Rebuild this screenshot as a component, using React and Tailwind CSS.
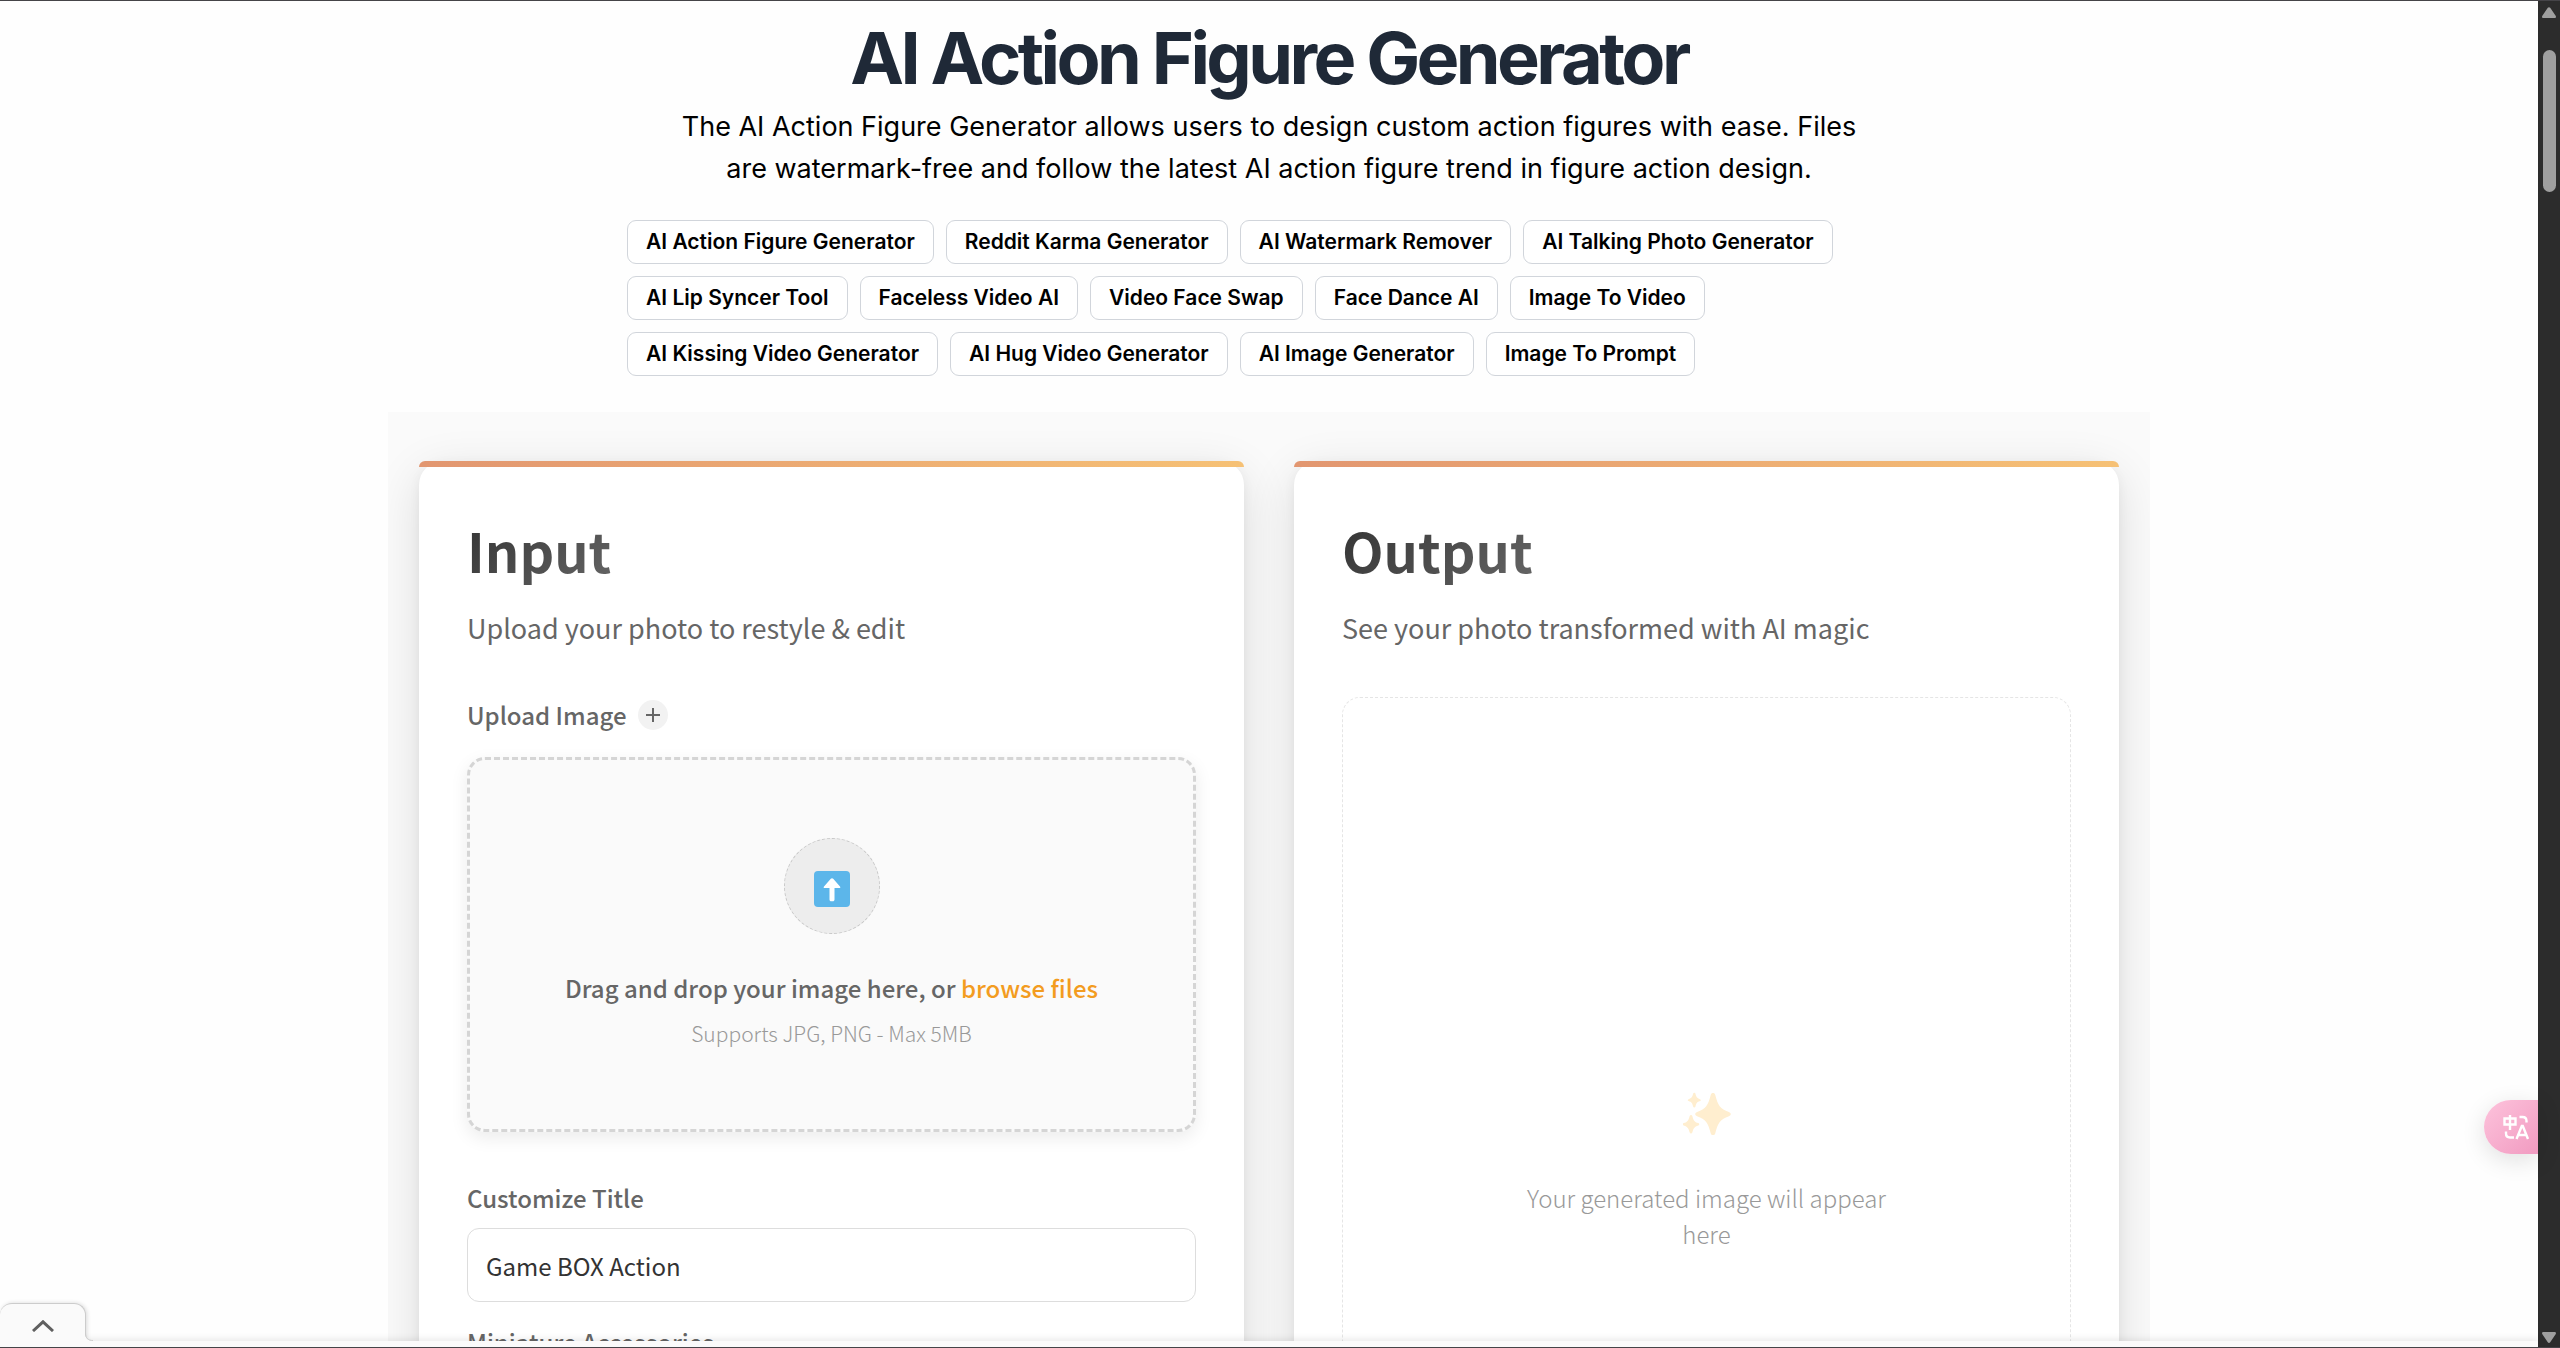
const TOOLS = [
  "AI Action Figure Generator",
  "Reddit Karma Generator",
  "AI Watermark Remover",
  "AI Talking Photo Generator",
  "AI Lip Syncer Tool",
  "Faceless Video AI",
  "Video Face Swap",
  "Face Dance AI",
  "Image To Video",
  "AI Kissing Video Generator",
  "AI Hug Video Generator",
  "AI Image Generator",
  "Image To Prompt",
];

function UploadIcon() {
  return (
    <svg viewBox="0 0 36 36" className="size-9" aria-hidden="true">
      <rect width="36" height="36" rx="4" fill="#5cb6ea" />
      <path
        d="M18 7.2c.5 0 .9.2 1.200.6l6.800 7.600c.8.9.2 1.600-.8 1.600h-4.700v11.500c0 1-.8 1.800-1.700 1.800h-1.600c-1 0-1.700-.8-1.700-1.800V17h-4.700c-1 0-1.600-.7-.8-1.600l6.800-7.600c.3-.4.700-.6 1.200-.6Z"
        fill="#fff"
      />
    </svg>
  );
}

function SparklesIcon() {
  return (
    <svg viewBox="0 0 48 44" className="h-11 w-12" fill="#ffeecf" aria-hidden="true">
      <path d="M30 1c1.200 0 1.900.6 2.200 1.700 2.600 10.300 5 14.300 13.700 17.200 2.500.8 2.500 3.600 0 4.400-8.700 2.900-11.100 6.900-13.700 17.200-.3 1.100-1 1.600-2.200 1.600s-1.900-.5-2.200-1.600c-2.600-10.300-5-14.300-13.700-17.200-2.500-.8-2.500-3.600 0-4.400 8.700-2.900 11.100-6.900 13.700-17.200C28.100 1.600 28.800 1 30 1Z" />
      <path d="M11.300.8c.6 0 1 .3 1.100.8.900 3.500 1.500 4.500 4.600 5.600 1.100.4 1.100 1.500 0 1.900-3.100 1.100-3.700 2.100-4.600 5.600-.1.500-.5.800-1.100.8s-1-.3-1.100-.8c-.9-3.500-1.500-4.500-4.600-5.600-1.100-.4-1.100-1.500 0-1.900 3.100-1.100 3.700-2.100 4.600-5.600.1-.5.500-.8 1.100-.8Z" />
      <path d="M8 23c.6 0 1.100.3 1.300.9 1.200 4.500 2 5.900 6 7.200 1.300.5 1.300 1.800 0 2.300-4 1.300-4.800 2.700-6 7.200-.2.600-.7.900-1.300.9s-1.100-.3-1.300-.9c-1.200-4.500-2-5.900-6-7.200-1.300-.5-1.300-1.800 0-2.300 4-1.300 4.800-2.700 6-7.200.2-.6.700-.9 1.300-.9Z" />
    </svg>
  );
}

function TranslateIcon() {
  return (
    <svg
      viewBox="0 0 26 26"
      className="size-[26px]"
      fill="none"
      stroke="#fff"
      strokeWidth="2.400"
      aria-hidden="true"
    >
      <path d="M1.500 4.500h11v6h-11zM7 1v15" />
      <path d="M16.500 3h3c2.500 0 4 1.500 4 4v1.500M3 17.500v2c0 2.500 1.500 4 4 4h4" />
      <path d="M13.500 25 18.800 12h1L25 25M15.500 21h7.500" />
    </svg>
  );
}

function Card({ title, subtitle, children }) {
  return (
    <section className="relative min-w-0 flex-1 rounded-3xl bg-white px-12 pb-12 pt-[50px] shadow-[0_12px_48px_rgba(0,0,0,0.12),0_3px_12px_rgba(0,0,0,0.05)]">
      <div className="absolute inset-x-0 top-0 h-1.5 rounded-t-md bg-linear-to-r from-[#e29670] to-[#f6c175]" />
      <h2 className="w-fit bg-linear-135 from-[#333333] to-[#666666] bg-clip-text text-[54px] font-bold leading-[78px] text-transparent">
        {title}
      </h2>
      <p className="mt-[18px] text-[27px] leading-[42px] text-[#666666]">{subtitle}</p>
      {children}
    </section>
  );
}

export default function App() {
  return (
    <div className="flex h-screen flex-col overflow-hidden border-y border-[#454448] bg-[#2c2c2c] font-['Inter',sans-serif] text-black">
      <div className="flex min-h-0 flex-1">
        <div className="relative flex min-w-0 flex-1 flex-col bg-white">
          <main className="min-h-0 flex-1 overflow-hidden bg-[#fefefe]">
            <header className="mx-auto flex w-full max-w-[1284px] flex-col items-center pt-[21px]">
              <h1 className="text-center text-[72px] font-bold leading-[72px] tracking-tighter text-[#1f2937]">
                AI Action Figure Generator
              </h1>
              <p className="mt-3 max-w-[1200px] text-center text-[27px] leading-[42px]">
                The AI Action Figure Generator allows users to design custom action figures with ease.
                Files are watermark-free and follow the latest AI action figure trend in figure action
                design.
              </p>
              <nav className="mt-[30px] flex w-full flex-wrap gap-3" aria-label="Tools">
                {TOOLS.map((tool) => (
                  <a
                    key={tool}
                    href="#"
                    className="rounded-[9px] border border-[#d1d5db] bg-white px-[18px] text-[21px] font-semibold leading-[42px]"
                  >
                    {tool}
                  </a>
                ))}
              </nav>
            </header>

            <div className="mx-auto mt-9 flex w-full max-w-[1762px] gap-[50px] overflow-hidden bg-[#fafafa] px-[31px] pb-12 pt-[49px] font-['Noto_Sans_CJK_SC',sans-serif]">
              <Card title="Input" subtitle="Upload your photo to restyle &amp; edit">
                <div className="mt-12 flex items-center gap-3">
                  <span className="text-2xl font-medium leading-[36px] text-[#666666]">
                    Upload Image
                  </span>
                  <button
                    type="button"
                    aria-label="Add image"
                    className="flex size-[30px] items-center justify-center rounded-full bg-[#f2f2f2] text-[#666666]"
                  >
                    <svg viewBox="0 0 14 14" className="size-3.5" stroke="currentColor" strokeWidth="2">
                      <path d="M7 0v14M0 7h14" />
                    </svg>
                  </button>
                </div>
                <div className="mt-6 flex h-[375px] flex-col items-center rounded-[18px] border-3 border-dashed border-[#d5d5d5] bg-[#fafafa] pt-[78px] shadow-[0_6px_18px_rgba(0,0,0,0.08)]">
                  <div className="flex size-24 items-center justify-center rounded-full border border-dashed border-[#c8c8c8] bg-[#ededed] pt-1.5">
                    <UploadIcon />
                  </div>
                  <p className="mt-9 text-2xl font-medium leading-[36px] text-[#666666]">
                    Drag and drop your image here, or{" "}
                    <a href="#" className="text-[#f39c1f]">
                      browse files
                    </a>
                  </p>
                  <p className="mt-3 text-[21px] font-light leading-[30px] text-[#999999]">
                    Supports JPG, PNG - Max 5MB
                  </p>
                </div>
                <label
                  htmlFor="custom-title"
                  className="mt-12 block text-2xl font-medium leading-[36px] text-[#666666]"
                >
                  Customize Title
                </label>
                <input
                  id="custom-title"
                  defaultValue="Game BOX Action"
                  className="mt-3 block h-[74px] w-full rounded-xl border border-[#dddddd] bg-white px-[18px] text-2xl text-[#333333] outline-none"
                />
                <label
                  htmlFor="accessories"
                  className="mt-[22px] block text-2xl font-medium leading-[36px] text-[#666666]"
                >
                  Miniature Accessories
                </label>
                <input
                  id="accessories"
                  className="mt-3 block h-[74px] w-full rounded-xl border border-[#dddddd] bg-white px-[18px] text-2xl text-[#333333] outline-none"
                />
              </Card>

              <Card title="Output" subtitle="See your photo transformed with AI magic">
                <div className="mt-12 flex h-[1000px] flex-col items-center rounded-[18px] border border-dashed border-[#e5e5e5] bg-white pt-[394px]">
                  <SparklesIcon />
                  <p className="mt-11 max-w-[400px] text-center text-2xl font-light leading-[36px] text-[#999999]">
                    Your generated image will appear here
                  </p>
                </div>
              </Card>
            </div>
          </main>

          <div className="relative h-1.5 shrink-0 bg-[#fafafa] shadow-[0_0_9px_rgba(0,0,0,0.15)]">
            <button
              type="button"
              aria-label="Expand panel"
              className="absolute bottom-0 left-0 flex h-11 w-[86px] items-center justify-center rounded-t-xl border-r border-t border-[#cccccc] bg-[#fafafa] text-[#5f5f5f] shadow-[1px_0_4px_rgba(0,0,0,0.15)]"
            >
              <svg viewBox="0 0 22 12" className="h-3 w-[22px]" fill="none" stroke="currentColor" strokeWidth="3">
                <path d="M1 11 11 1.800 21 11" />
              </svg>
            </button>
            <svg viewBox="0 0 8 14" className="absolute bottom-0 left-[85px] h-3.5 w-2" aria-hidden="true">
              <path d="M0 0c0 5 3 8 8 8v6H0Z" fill="#fafafa" />
              <path d="M.5 0c0 5 2.500 7.500 7.500 7.500" fill="none" stroke="#cccccc" />
            </svg>
          </div>

          <button
            type="button"
            aria-label="Translate page"
            className="absolute right-0 top-[1099px] flex h-[54px] w-[54px] items-center rounded-l-full bg-linear-135 from-[#fdc3dc] to-[#f19bc1] pl-[19px] shadow-[0_6px_24px_rgba(0,0,0,0.12)]"
          >
            <TranslateIcon />
          </button>
        </div>

        <div className="flex w-[22px] shrink-0 flex-col items-center justify-between bg-[#2c2c2c] pb-1 pt-1.5 text-[#9f9f9f]">
          <div className="flex flex-col items-center gap-8">
            <svg viewBox="0 0 14 11" className="h-[11px] w-3.5" fill="currentColor" aria-hidden="true">
              <path d="M5.800.8c.6-.9 1.800-.9 2.400 0L13.800 9c.4.800 0 2-1 2H1.200c-1 0-1.400-1.200-1-2Z" />
            </svg>
            <div className="h-[142px] w-[13px] rounded-full bg-[#9f9f9f]" />
          </div>
          <svg viewBox="0 0 14 11" className="h-[11px] w-3.5" fill="currentColor" aria-hidden="true">
            <path d="M5.800 10.200c.6.900 1.800.9 2.400 0L13.800 2c.4-.8 0-2-1-2H1.200c-1 0-1.400 1.200-1 2Z" />
          </svg>
        </div>
      </div>
    </div>
  );
}
